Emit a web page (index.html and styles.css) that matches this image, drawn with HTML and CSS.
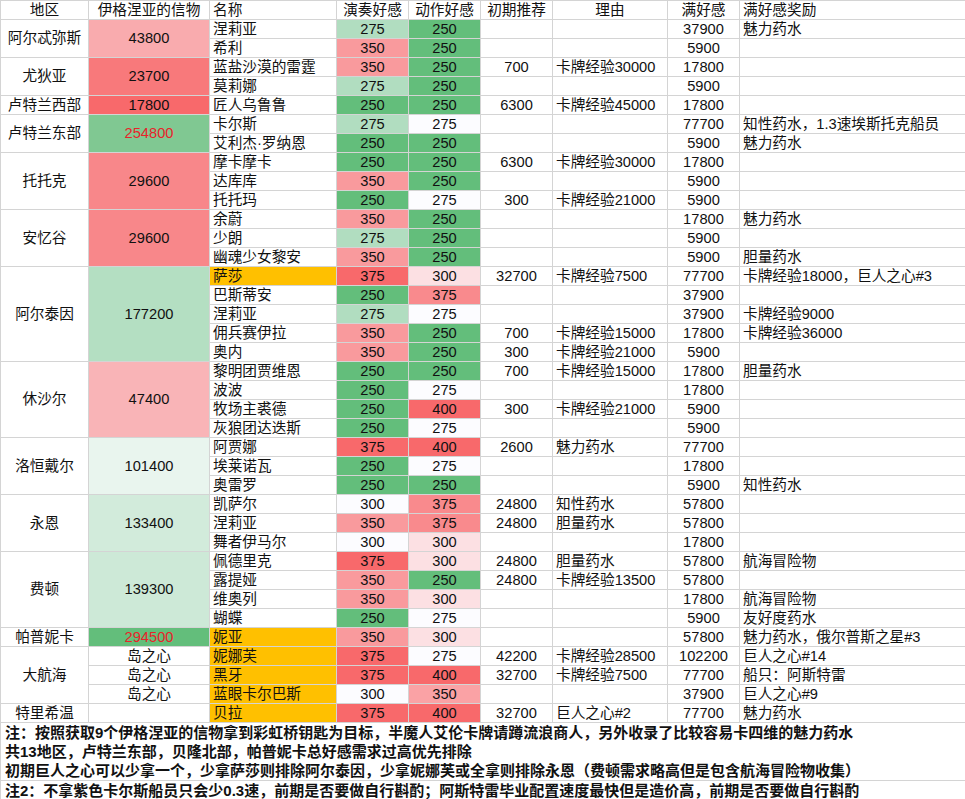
FILE: index.html
```html
<!DOCTYPE html>
<html lang="zh-CN">
<head>
<meta charset="utf-8">
<title>伊格涅亚的信物</title>
<link rel="stylesheet" href="styles.css">
</head>
<body>
<table class="sheet">
<colgroup>
<col class="c1"><col class="c2"><col class="c3"><col class="c4"><col class="c5"><col class="c6"><col class="c7"><col class="c8"><col class="c9">
</colgroup>
<tbody>
<tr><td class="ctr">地区</td><td class="ctr">伊格涅亚的信物</td><td class="lft">名称</td><td class="ctr">演奏好感</td><td class="ctr">动作好感</td><td class="ctr">初期推荐</td><td class="ctr">理由</td><td class="ctr">满好感</td><td class="lft">满好感奖励</td></tr>

<tr><td class="ctr" rowspan="2">阿尔忒弥斯</td><td class="ctr x43800" rowspan="2">43800</td><td class="lft">涅莉亚</td><td class="ctr pg">275</td><td class="ctr g">250</td><td></td><td></td><td class="ctr">37900</td><td class="lft">魅力药水</td></tr>
<tr><td class="lft">希利</td><td class="ctr p350">350</td><td class="ctr g">250</td><td></td><td></td><td class="ctr">5900</td><td></td></tr>

<tr><td class="ctr" rowspan="2">尤狄亚</td><td class="ctr x23700" rowspan="2">23700</td><td class="lft">蓝盐沙漠的雷霆</td><td class="ctr p350">350</td><td class="ctr g">250</td><td class="ctr">700</td><td class="lft">卡牌经验30000</td><td class="ctr">17800</td><td></td></tr>
<tr><td class="lft">莫莉娜</td><td class="ctr pg">275</td><td class="ctr g">250</td><td></td><td></td><td class="ctr">5900</td><td></td></tr>

<tr><td class="ctr">卢特兰西部</td><td class="ctr x17800">17800</td><td class="lft">匠人乌鲁鲁</td><td class="ctr g">250</td><td class="ctr g">250</td><td class="ctr">6300</td><td class="lft">卡牌经验45000</td><td class="ctr">17800</td><td></td></tr>

<tr><td class="ctr" rowspan="2">卢特兰东部</td><td class="ctr x254800 red" rowspan="2">254800</td><td class="lft">卡尔斯</td><td class="ctr pg">275</td><td class="ctr w">275</td><td></td><td></td><td class="ctr">77700</td><td class="lft">知性药水，1.3速埃斯托克船员</td></tr>
<tr><td class="lft">艾利杰·罗纳恩</td><td class="ctr g">250</td><td class="ctr g">250</td><td></td><td></td><td class="ctr">5900</td><td class="lft">魅力药水</td></tr>

<tr><td class="ctr" rowspan="3">托托克</td><td class="ctr x29600" rowspan="3">29600</td><td class="lft">摩卡摩卡</td><td class="ctr g">250</td><td class="ctr g">250</td><td class="ctr">6300</td><td class="lft">卡牌经验30000</td><td class="ctr">17800</td><td></td></tr>
<tr><td class="lft">达库库</td><td class="ctr p350">350</td><td class="ctr g">250</td><td></td><td></td><td class="ctr">5900</td><td></td></tr>
<tr><td class="lft">托托玛</td><td class="ctr g">250</td><td class="ctr w">275</td><td class="ctr">300</td><td class="lft">卡牌经验21000</td><td class="ctr">5900</td><td></td></tr>

<tr><td class="ctr" rowspan="3">安忆谷</td><td class="ctr x29600" rowspan="3">29600</td><td class="lft">余蔚</td><td class="ctr p350">350</td><td class="ctr g">250</td><td></td><td></td><td class="ctr">17800</td><td class="lft">魅力药水</td></tr>
<tr><td class="lft">少朗</td><td class="ctr pg">275</td><td class="ctr g">250</td><td></td><td></td><td class="ctr">5900</td><td></td></tr>
<tr><td class="lft">幽魂少女黎安</td><td class="ctr p350">350</td><td class="ctr g">250</td><td></td><td></td><td class="ctr">5900</td><td class="lft">胆量药水</td></tr>

<tr><td class="ctr" rowspan="5">阿尔泰因</td><td class="ctr x177200" rowspan="5">177200</td><td class="lft hl">萨莎</td><td class="ctr r">375</td><td class="ctr a300">300</td><td class="ctr">32700</td><td class="lft">卡牌经验7500</td><td class="ctr">77700</td><td class="lft">卡牌经验18000，巨人之心#3</td></tr>
<tr><td class="lft">巴斯蒂安</td><td class="ctr g">250</td><td class="ctr a375">375</td><td></td><td></td><td class="ctr">37900</td><td></td></tr>
<tr><td class="lft">涅莉亚</td><td class="ctr pg">275</td><td class="ctr w">275</td><td></td><td></td><td class="ctr">37900</td><td class="lft">卡牌经验9000</td></tr>
<tr><td class="lft">佣兵赛伊拉</td><td class="ctr p350">350</td><td class="ctr g">250</td><td class="ctr">700</td><td class="lft">卡牌经验15000</td><td class="ctr">17800</td><td class="lft">卡牌经验36000</td></tr>
<tr><td class="lft">奥内</td><td class="ctr p350">350</td><td class="ctr g">250</td><td class="ctr">300</td><td class="lft">卡牌经验21000</td><td class="ctr">5900</td><td></td></tr>

<tr><td class="ctr" rowspan="4">休沙尔</td><td class="ctr x47400" rowspan="4">47400</td><td class="lft">黎明团贾维恩</td><td class="ctr g">250</td><td class="ctr g">250</td><td class="ctr">700</td><td class="lft">卡牌经验15000</td><td class="ctr">17800</td><td class="lft">胆量药水</td></tr>
<tr><td class="lft">波波</td><td class="ctr g">250</td><td class="ctr w">275</td><td></td><td></td><td class="ctr">17800</td><td></td></tr>
<tr><td class="lft">牧场主裘德</td><td class="ctr g">250</td><td class="ctr r">400</td><td class="ctr">300</td><td class="lft">卡牌经验21000</td><td class="ctr">5900</td><td></td></tr>
<tr><td class="lft">灰狼团达迭斯</td><td class="ctr g">250</td><td class="ctr w">275</td><td></td><td></td><td class="ctr">5900</td><td></td></tr>

<tr><td class="ctr" rowspan="3">洛恒戴尔</td><td class="ctr x101400" rowspan="3">101400</td><td class="lft">阿贾娜</td><td class="ctr r">375</td><td class="ctr r">400</td><td class="ctr">2600</td><td class="lft">魅力药水</td><td class="ctr">77700</td><td></td></tr>
<tr><td class="lft">埃莱诺瓦</td><td class="ctr g">250</td><td class="ctr w">275</td><td></td><td></td><td class="ctr">17800</td><td></td></tr>
<tr><td class="lft">奥雷罗</td><td class="ctr g">250</td><td class="ctr g">250</td><td></td><td></td><td class="ctr">5900</td><td class="lft">知性药水</td></tr>

<tr><td class="ctr" rowspan="3">永恩</td><td class="ctr x133400" rowspan="3">133400</td><td class="lft">凯萨尔</td><td class="ctr w">300</td><td class="ctr a375">375</td><td class="ctr">24800</td><td class="lft">知性药水</td><td class="ctr">57800</td><td></td></tr>
<tr><td class="lft">涅莉亚</td><td class="ctr p350">350</td><td class="ctr a375">375</td><td class="ctr">24800</td><td class="lft">胆量药水</td><td class="ctr">57800</td><td></td></tr>
<tr><td class="lft">舞者伊马尔</td><td class="ctr w">300</td><td class="ctr a300">300</td><td></td><td></td><td class="ctr">17800</td><td></td></tr>

<tr><td class="ctr" rowspan="4">费顿</td><td class="ctr x139300" rowspan="4">139300</td><td class="lft">佩德里克</td><td class="ctr r">375</td><td class="ctr a300">300</td><td class="ctr">24800</td><td class="lft">胆量药水</td><td class="ctr">57800</td><td class="lft">航海冒险物</td></tr>
<tr><td class="lft">露提娅</td><td class="ctr p350">350</td><td class="ctr g">250</td><td class="ctr">24800</td><td class="lft">卡牌经验13500</td><td class="ctr">57800</td><td></td></tr>
<tr><td class="lft">维奥列</td><td class="ctr p350">350</td><td class="ctr a300">300</td><td></td><td></td><td class="ctr">17800</td><td class="lft">航海冒险物</td></tr>
<tr><td class="lft">蝴蝶</td><td class="ctr g">250</td><td class="ctr w">275</td><td></td><td></td><td class="ctr">5900</td><td class="lft">友好度药水</td></tr>

<tr><td class="ctr">帕普妮卡</td><td class="ctr g red">294500</td><td class="lft hl">妮亚</td><td class="ctr p350">350</td><td class="ctr a300">300</td><td></td><td></td><td class="ctr">57800</td><td class="lft">魅力药水，俄尔普斯之星#3</td></tr>

<tr><td class="ctr" rowspan="3">大航海</td><td class="ctr">岛之心</td><td class="lft hl">妮娜芙</td><td class="ctr r">375</td><td class="ctr w">275</td><td class="ctr">42200</td><td class="lft">卡牌经验28500</td><td class="ctr">102200</td><td class="lft">巨人之心#14</td></tr>
<tr><td class="ctr">岛之心</td><td class="lft hl">黑牙</td><td class="ctr r">375</td><td class="ctr r">400</td><td class="ctr">32700</td><td class="lft">卡牌经验7500</td><td class="ctr">77700</td><td class="lft">船只：阿斯特雷</td></tr>
<tr><td class="ctr">岛之心</td><td class="lft hl">蓝眼卡尔巴斯</td><td class="ctr w">300</td><td class="ctr a350">350</td><td></td><td></td><td class="ctr">37900</td><td class="lft">巨人之心#9</td></tr>

<tr><td class="ctr">特里希温</td><td></td><td class="lft hl">贝拉</td><td class="ctr r">375</td><td class="ctr r">400</td><td class="ctr">32700</td><td class="lft">巨人之心#2</td><td class="ctr">77700</td><td class="lft">魅力药水</td></tr>

<tr class="notes"><td class="note" colspan="9">
<div class="line">注：按照获取9个伊格涅亚的信物拿到彩虹桥钥匙为目标，半魔人艾伦卡牌请蹲流浪商人，另外收录了比较容易卡四维的魅力药水</div>
<div class="line">共13地区，卢特兰东部，贝隆北部，帕普妮卡总好感需求过高优先排除</div>
<div class="line">初期巨人之心可以少拿一个，少拿萨莎则排除阿尔泰因，少拿妮娜芙或全拿则排除永恩（费顿需求略高但是包含航海冒险物收集）</div>
</td></tr>
<tr><td class="note" colspan="9"><div class="line">注2：不拿紫色卡尔斯船员只会少0.3速，前期是否要做自行斟酌；阿斯特雷毕业配置速度最快但是造价高，前期是否要做自行斟酌</div></td></tr>
</tbody>
</table>
</body>
</html>
```

FILE: styles.css
```css
html, body {
  margin: 0;
  padding: 0;
  background: #ffffff;
}

body {
  font-family: "Liberation Sans", "Noto Sans CJK SC", sans-serif;
  font-size: 14.67px;
  color: #111111;
}

.sheet {
  border-collapse: collapse;
  table-layout: fixed;
  width: 965px;
}

.c1 { width: 88px; }
.c2 { width: 121px; }
.c3 { width: 127px; }
.c4 { width: 72px; }
.c5 { width: 72px; }
.c6 { width: 72px; }
.c7 { width: 115px; }
.c8 { width: 72px; }
.c9 { width: 226px; }

.sheet tr {
  height: 19px;
}

.sheet td {
  border: 1px solid #d4d4d4;
  padding: 0;
  line-height: 17px;
  white-space: nowrap;
  overflow: hidden;
  vertical-align: middle;
}

.ctr { text-align: center; }
.lft { text-align: left; padding-left: 3px !important; }

/* colour scales */
.g { background: #63be7b; }
.pg { background: #b1ddc0; }
.w { background: #fcfcff; }
.p350 { background: #f99a9d; }
.r { background: #f8696b; }
.a300 { background: #fce0e3; }
.a350 { background: #faa2a5; }
.a375 { background: #f98a8d; }

.x17800 { background: #f8696b; }
.x23700 { background: #f8797b; }
.x29600 { background: #f8878a; }
.x43800 { background: #f9abae; }
.x47400 { background: #f9b4b7; }
.x101400 { background: #e9f5ee; }
.x133400 { background: #d2ebdb; }
.x139300 { background: #cde9d7; }
.x177200 { background: #b4dfc2; }
.x254800 { background: #80c892; }

.red { color: #e8232a; }
.hl { background: #ffc000; }

.notes {
  height: 57px;
}

.sheet td.note {
  padding: 0 0 0 4px;
  font-weight: bold;
  font-size: 15px;
  letter-spacing: 0;
  overflow: visible;
}

.line {
  height: 19px;
  line-height: 19px;
  white-space: nowrap;
}
```
